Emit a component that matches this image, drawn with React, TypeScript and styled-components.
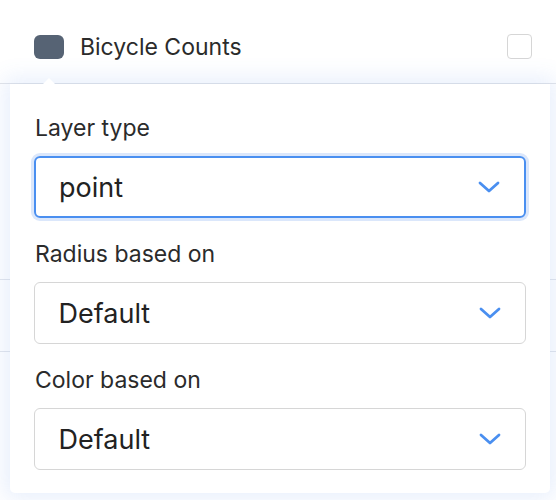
import React from 'react';
import styled, { createGlobalStyle } from 'styled-components';

const GlobalStyle = createGlobalStyle`
  html, body {
    margin: 0;
    padding: 0;
    background: #ffffff;
    font-family: Inter, "Noto Sans", "Liberation Sans", sans-serif;
    color: #2b2b2b;
  }
`;

const Page = styled.div`
  width: 556px;
  height: 500px;
  overflow: hidden;
  position: relative;
`;

const Header = styled.div`
  height: 84px;
  box-sizing: border-box;
  border-bottom: 1px solid #e3e5e9;
  display: flex;
  align-items: flex-start;
  padding: 34px 24px 0 34px;
  gap: 16px;
`;

const Swatch = styled.div<{ color: string }>`
  width: 30px;
  height: 24px;
  border-radius: 6px;
  background: ${(p) => p.color};
  margin-top: 1px;
`;

const Title = styled.div`
  flex: 1;
  font-size: 23px;
  line-height: 26px;
  color: #2b2b2b;
`;

const Checkbox = styled.div`
  width: 25px;
  height: 25px;
  box-sizing: border-box;
  border: 1.5px solid #d6d6d6;
  border-radius: 4px;
`;

const Behind = styled.div`
  position: relative;
  height: 416px;
`;

const BehindRow = styled.div<{ h: number }>`
  height: ${(p) => p.h}px;
  border-bottom: 1px solid #e3e6ec;
`;

const Popover = styled.div`
  position: absolute;
  top: 0;
  left: 10px;
  width: 540px;
  height: 409px;
  box-sizing: border-box;
  background: #ffffff;
  border-radius: 0 0 5px 5px;
  box-shadow: 0 0 22px 6px rgba(78, 128, 230, 0.13);
  padding: 32px 24px 25px 24px;
  display: flex;
  flex-direction: column;
  gap: 24px;
`;

const Arrow = styled.div`
  position: absolute;
  top: -6px;
  left: 32px;
  width: 0;
  height: 0;
  border-left: 7px solid transparent;
  border-right: 7px solid transparent;
  border-bottom: 7px solid #ffffff;
`;

const Field = styled.div`
  display: flex;
  flex-direction: column;
  gap: 16px;
`;

const Label = styled.div`
  font-size: 23px;
  line-height: 24px;
  padding-left: 1px;
  color: #2b2b2b;
`;

const Select = styled.div<{ focused?: boolean }>`
  height: 62px;
  box-sizing: border-box;
  border-radius: 6px;
  border: ${(p) => (p.focused ? '2px solid #4a8ff0' : '1.5px solid #d6d6d6')};
  box-shadow: ${(p) => (p.focused ? '0 0 0 3px #dbe7fb' : 'none')};
  display: flex;
  align-items: center;
  justify-content: space-between;
  padding: 0 24px 0 ${(p) => (p.focused ? '23px' : '23.5px')};
  font-size: 27px;
  color: #222;
`;

const Chevron = () => (
  <svg width="22" height="12" viewBox="0 0 22 12" fill="none">
    <path d="M2 2 L11 10 L20 2" stroke="#4a8ff0" strokeWidth="2.8" strokeLinecap="round" strokeLinejoin="round" />
  </svg>
);

const fields = [
  { label: 'Layer type', value: 'point', focused: true },
  { label: 'Radius based on', value: 'Default' },
  { label: 'Color based on', value: 'Default' },
];

export default function App() {
  return (
    <Page>
      <GlobalStyle />
      <Header>
        <Swatch color="#566374" />
        <Title>Bicycle Counts</Title>
        <Checkbox />
      </Header>
      <Behind>
        <BehindRow h={195} />
        <BehindRow h={71} />
        <Popover>
          <Arrow />
          {fields.map((f) => (
            <Field key={f.label}>
              <Label>{f.label}</Label>
              <Select focused={f.focused}>
                <span>{f.value}</span>
                <Chevron />
              </Select>
            </Field>
          ))}
        </Popover>
      </Behind>
    </Page>
  );
}
